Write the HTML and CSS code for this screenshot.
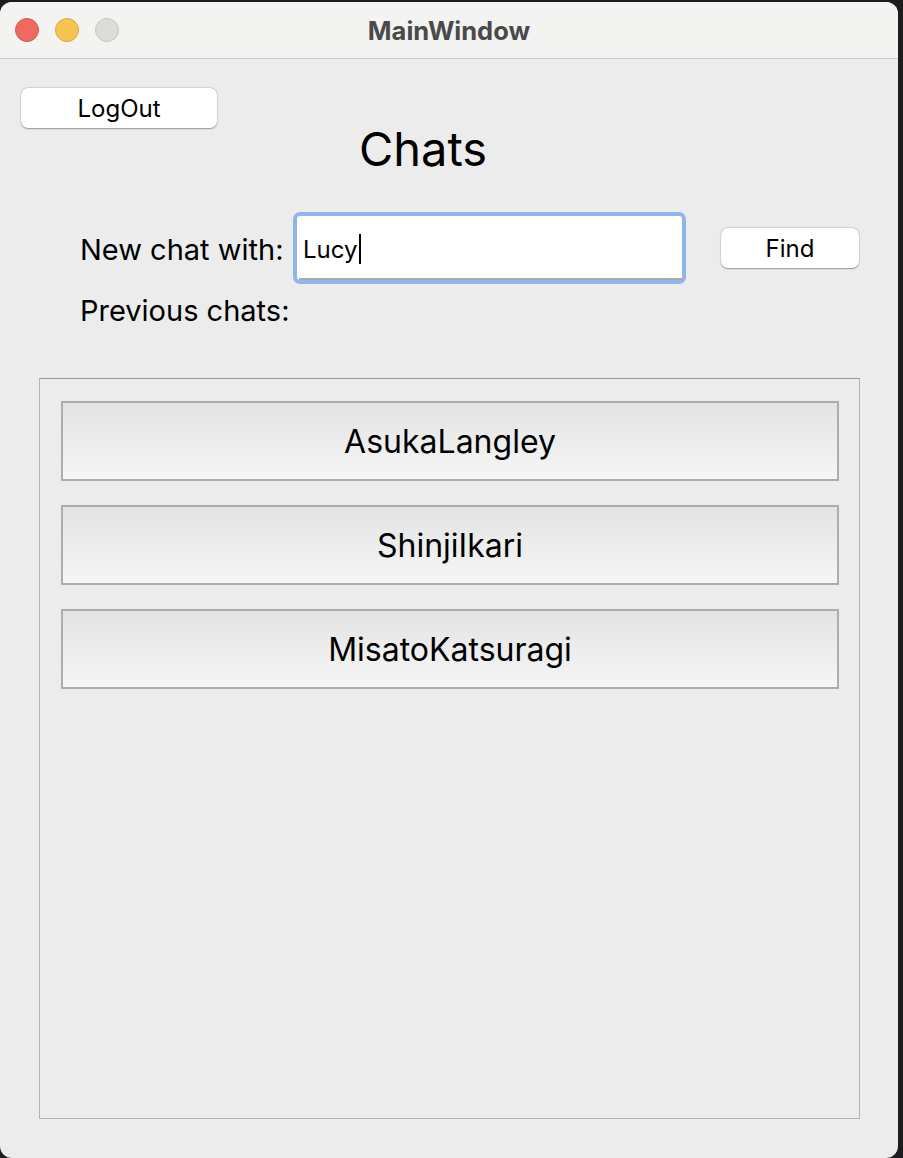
FILE: index.html
```html
<!DOCTYPE html>
<html>
<head>
<meta charset="utf-8">
<title>MainWindow</title>
<link rel="stylesheet" href="styles.css">
</head>
<body>
<div class="window">
  <div class="titlebar">
    <div class="lights">
      <span class="light red"></span>
      <span class="light yellow"></span>
      <span class="light gray"></span>
    </div>
    <div class="title">MainWindow</div>
  </div>
  <div class="content">
    <button class="btn logout">LogOut</button>
    <h1 class="heading">Chats</h1>
    <div class="newrow">
      <span class="label">New chat with:</span>
      <div class="field"><div class="field-inner"><span>Lucy</span><span class="caret"></span></div></div>
      <button class="btn find">Find</button>
    </div>
    <div class="label prev">Previous chats:</div>
    <div class="list">
      <div class="item">AsukaLangley</div>
      <div class="item">ShinjiIkari</div>
      <div class="item">MisatoKatsuragi</div>
    </div>
  </div>
</div>
</body>
</html>
```
FILE: styles.css
```css
html, body {
  margin: 0;
  padding: 0;
  background: #1d1d1f;
}
body {
  font-family: Inter, "Noto Sans", "Liberation Sans", sans-serif;
  color: #000;
}
.window {
  margin-top: 2px;
  width: 898px;
  height: 1156px;
  border-radius: 12px;
  overflow: hidden;
  background: #ececec;
  display: flex;
  flex-direction: column;
}
.titlebar {
  height: 56px;
  background: #f3f3f1;
  border-bottom: 1px solid #cdcdcd;
  display: flex;
  align-items: center;
  position: relative;
}
.lights {
  display: flex;
  gap: 16px;
  padding-left: 15px;
}
.light {
  width: 22px;
  height: 22px;
  border-radius: 50%;
  border: 1px solid transparent;
}
.red { background: #ee6a5f; border-color: #d65a50; }
.yellow { background: #f5c451; border-color: #d9a93d; }
.gray { background: #dcdcda; border-color: #c6c6c4; }
.title {
  position: absolute;
  left: 0;
  right: 0;
  text-align: center;
  font-weight: 700;
  font-size: 25.5px;
  color: #4a4a4a;
}
.content {
  flex: 1;
  display: flex;
  flex-direction: column;
  align-items: flex-start;
}
.btn {
  font-family: inherit;
  background: #fff;
  border: none;
  border-radius: 7px;
  box-shadow: 0 0.5px 1.5px rgba(0,0,0,0.35), 0 0 0 0.5px rgba(0,0,0,0.08);
  font-size: 24px;
  color: #000;
  padding: 0;
}
.logout {
  margin: 29px 0 0 21px;
  width: 196px;
  height: 40px;
}
.heading {
  margin: 0;
  align-self: stretch;
  padding-right: 52px;
  text-align: center;
  font-weight: 400;
  font-size: 47px;
  line-height: 42px;
}
.newrow {
  margin-top: 42px;
  display: flex;
  align-items: center;
}
.label {
  font-size: 29px;
  line-height: 34px;
}
.newrow .label {
  margin-left: 80px;
  width: 213px;
  position: relative;
  top: 2px;
}
.field {
  width: 385px;
  height: 64px;
  border: 4px solid #8fb5ec;
  border-radius: 7px;
  background: #fff;
}
.field-inner {
  height: 100%;
  box-sizing: border-box;
  border-bottom: 2px solid #a9a9a9;
  margin: 0 0 0 2px;
  display: flex;
  align-items: center;
  padding: 4px 0 0 4px;
  font-size: 24px;
}
.caret {
  display: inline-block;
  width: 2px;
  height: 30px;
  background: #000;
  margin-left: 1px;
}
.find {
  margin-left: 35px;
  width: 138px;
  height: 40px;
}
.prev {
  margin: 10px 0 0 80px;
}
.list {
  margin: 50px 0 0 39px;
  width: 821px;
  height: 741px;
  box-sizing: border-box;
  border: 1px solid #b3b3b3;
  border-top-color: #999;
  padding: 22px 0 0 21px;
  display: flex;
  flex-direction: column;
  gap: 24px;
}
.item {
  box-sizing: border-box;
  width: 778px;
  height: 80px;
  flex: none;
  border: 2px solid #adadad;
  background: linear-gradient(#e3e3e3, #f6f6f6);
  display: flex;
  align-items: center;
  justify-content: center;
  font-size: 32px;
}
```
